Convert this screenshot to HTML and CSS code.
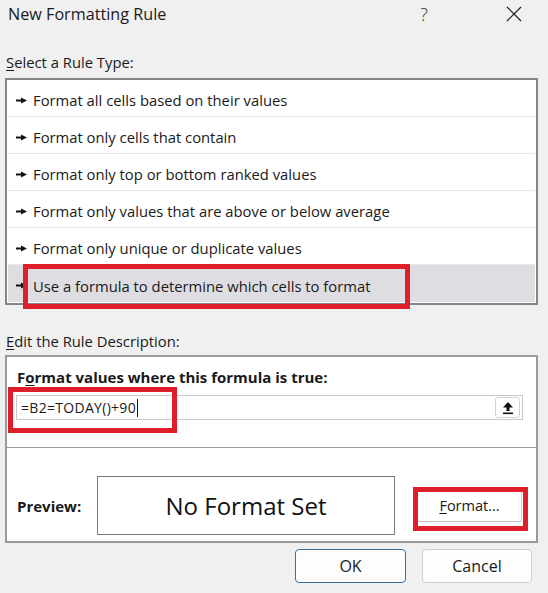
FILE: index.html
```html
<!DOCTYPE html>
<html>
<head>
<meta charset="utf-8">
<link rel="stylesheet" href="styles.css">
</head>
<body>
<div class="dialog">
  <header class="titlebar">
    <span class="title">New Formatting Rule</span>
    <span class="help">?</span>
    <span class="close"><svg width="16" height="16" viewBox="0 0 16 16"><path d="M1 1L15 15M15 1L1 15" stroke="#1a1a1a" stroke-width="1.2" fill="none"/></svg></span>
  </header>

  <div class="label sel-label"><u>S</u>elect a Rule Type:</div>
  <ul class="listbox">
    <li class="row"><svg class="arrow" width="11" height="7" viewBox="0 0 11 7"><path d="M0 3.5H6" stroke="#111" stroke-width="2"/><path d="M5 0.5L11 3.5L5 6.5Z" fill="#111"/></svg><span>Format all cells based on their values</span></li>
    <li class="row"><svg class="arrow" width="11" height="7" viewBox="0 0 11 7"><path d="M0 3.5H6" stroke="#111" stroke-width="2"/><path d="M5 0.5L11 3.5L5 6.5Z" fill="#111"/></svg><span>Format only cells that contain</span></li>
    <li class="row"><svg class="arrow" width="11" height="7" viewBox="0 0 11 7"><path d="M0 3.5H6" stroke="#111" stroke-width="2"/><path d="M5 0.5L11 3.5L5 6.5Z" fill="#111"/></svg><span>Format only top or bottom ranked values</span></li>
    <li class="row"><svg class="arrow" width="11" height="7" viewBox="0 0 11 7"><path d="M0 3.5H6" stroke="#111" stroke-width="2"/><path d="M5 0.5L11 3.5L5 6.5Z" fill="#111"/></svg><span>Format only values that are above or below average</span></li>
    <li class="row"><svg class="arrow" width="11" height="7" viewBox="0 0 11 7"><path d="M0 3.5H6" stroke="#111" stroke-width="2"/><path d="M5 0.5L11 3.5L5 6.5Z" fill="#111"/></svg><span>Format only unique or duplicate values</span></li>
    <li class="row selected"><svg class="arrow" width="11" height="7" viewBox="0 0 11 7"><path d="M0 3.5H6" stroke="#111" stroke-width="2"/><path d="M5 0.5L11 3.5L5 6.5Z" fill="#111"/></svg><span>Use a formula to determine which cells to format</span><span class="hl hl-row"></span></li>
  </ul>

  <div class="label edit-label"><u>E</u>dit the Rule Description:</div>
  <section class="panel">
    <div class="panel-top">
      <div class="formula-label">F<u>o</u>rmat values where this formula is true:</div>
      <div class="input-wrap">
        <div class="input">
          <span class="value">=B2=TODAY()+90</span><span class="caret"></span>
          <span class="collapse"><svg width="12" height="14" viewBox="0 0 12 14"><path d="M6 1L11 6.5H1Z" fill="#111"/><rect x="4.5" y="6" width="3" height="4" fill="#111"/><rect x="1" y="11.5" width="10" height="1.6" fill="#111"/></svg></span>
        </div>
        <span class="hl hl-input"></span>
      </div>
    </div>
    <div class="preview-row">
      <span class="preview-label">Preview:</span>
      <div class="preview-box">No Format Set</div>
      <div class="fmt-wrap">
        <span class="btn-format"><u>F</u>ormat...</span>
        <span class="hl hl-format"></span>
      </div>
    </div>
  </section>

  <footer class="actions">
    <span class="btn btn-ok">OK</span>
    <span class="btn btn-cancel">Cancel</span>
  </footer>
</div>
</body>
</html>
```

FILE: styles.css
```css
* { box-sizing: border-box; }
html, body {
  margin: 0;
  padding: 0;
  background: #f0f0f0;
}
body {
  font-family: "Open Sans", "Noto Sans", "DejaVu Sans", sans-serif;
  color: #1a1a1a;
  width: 548px;
  height: 593px;
  overflow: hidden;
}
u { text-decoration: underline; text-underline-offset: 2px; text-decoration-thickness: 1px; }

.titlebar {
  height: 27px;
  display: flex;
  align-items: center;
  padding-left: 8px;
}
.title {
  font-size: 16.2px;
  flex: 1;
  line-height: 20px;
  margin-top: 1px;
}
.help {
  font-size: 18px;
  color: #333;
  width: 20px;
  text-align: center;
  margin-right: 72px;
  font-weight: 300;
}
.close {
  width: 16px;
  height: 16px;
  margin-right: 26px;
  display: flex;
}

.label {
  font-size: 14.8px;
  line-height: 20px;
  padding-left: 6px;
}
.sel-label { margin-top: 25px; }
.edit-label { margin-top: 26px; }

.listbox {
  list-style: none;
  margin: 6px 0 0 5px;
  padding: 0 1px 1px 1px;
  width: 533px;
  background: #fff;
  border: 2px solid #858585;
}
.row {
  position: relative;
  height: 37px;
  border-bottom: 1px solid #e8e8e8;
  display: flex;
  align-items: center;
  padding-top: 4px;
  padding-left: 8px;
  font-size: 14.8px;
}
.row.selected {
  background: #dddde2;
  border-bottom: none;
}
.arrow { margin-right: 6px; flex: none; }

.hl {
  position: absolute;
  border: 5px solid #dc1f2b;
  pointer-events: none;
}
.hl-row {
  left: 15px;
  top: -1px;
  width: 387px;
  height: 45px;
}

.panel {
  margin: 4px 0 0 5px;
  width: 533px;
  background: #fff;
  border: 2px solid #9a9a9a;
}
.panel-top {
  padding: 10px 13px 27px 9px;
  border-bottom: 1px solid #9a9a9a;
}
.formula-label {
  font-size: 15px;
  font-weight: 700;
  line-height: 20px;
  padding-left: 1px;
}
.input-wrap {
  position: relative;
  margin-top: 8px;
}
.input {
  height: 25px;
  border: 1px solid #c8c8c8;
  display: flex;
  align-items: center;
  padding-left: 4px;
  font-size: 14px;
}
.value { letter-spacing: 0.3px; }
.caret {
  width: 1px;
  height: 18px;
  background: #111;
  margin-left: 1px;
}
.collapse {
  margin-left: auto;
  margin-right: 2px;
  width: 25px;
  height: 21px;
  border: 1px solid #d2d2d2;
  border-radius: 3px;
  display: flex;
  align-items: center;
  justify-content: center;
  background: #fff;
}
.hl-input {
  left: -8px;
  top: -8px;
  width: 169px;
  height: 46px;
}

.preview-row {
  display: flex;
  align-items: center;
  padding: 28px 0 6px 10px;
}
.preview-label {
  font-size: 15px;
  font-weight: 700;
  width: 80px;
}
.preview-box {
  width: 298px;
  height: 59px;
  border: 1px solid #7a7a7a;
  display: flex;
  align-items: center;
  justify-content: center;
  font-size: 24px;
  color: #111;
}
.fmt-wrap {
  position: relative;
  margin-left: 22px;
}
.btn-format {
  display: flex;
  align-items: center;
  justify-content: center;
  width: 105px;
  height: 32px;
  background: #fff;
  border: 1px solid #e2e2e2;
  border-right-color: #cfcfcf;
  border-bottom-color: #c4c4c4;
  border-radius: 3px;
  font-size: 14.5px;
}
.hl-format {
  left: -4px;
  top: -3px;
  width: 115px;
  height: 44px;
}

.actions {
  display: flex;
  justify-content: flex-end;
  gap: 16px;
  margin-top: 6px;
  padding-right: 16px;
}
.btn {
  display: flex;
  align-items: center;
  justify-content: center;
  height: 34px;
  background: #fdfdfd;
  border: 1px solid #d0d0d0;
  border-radius: 4px;
  font-size: 16px;
}
.btn-ok {
  width: 111px;
  border-color: #3f6c94;
}
.btn-cancel {
  width: 110px;
}
```
